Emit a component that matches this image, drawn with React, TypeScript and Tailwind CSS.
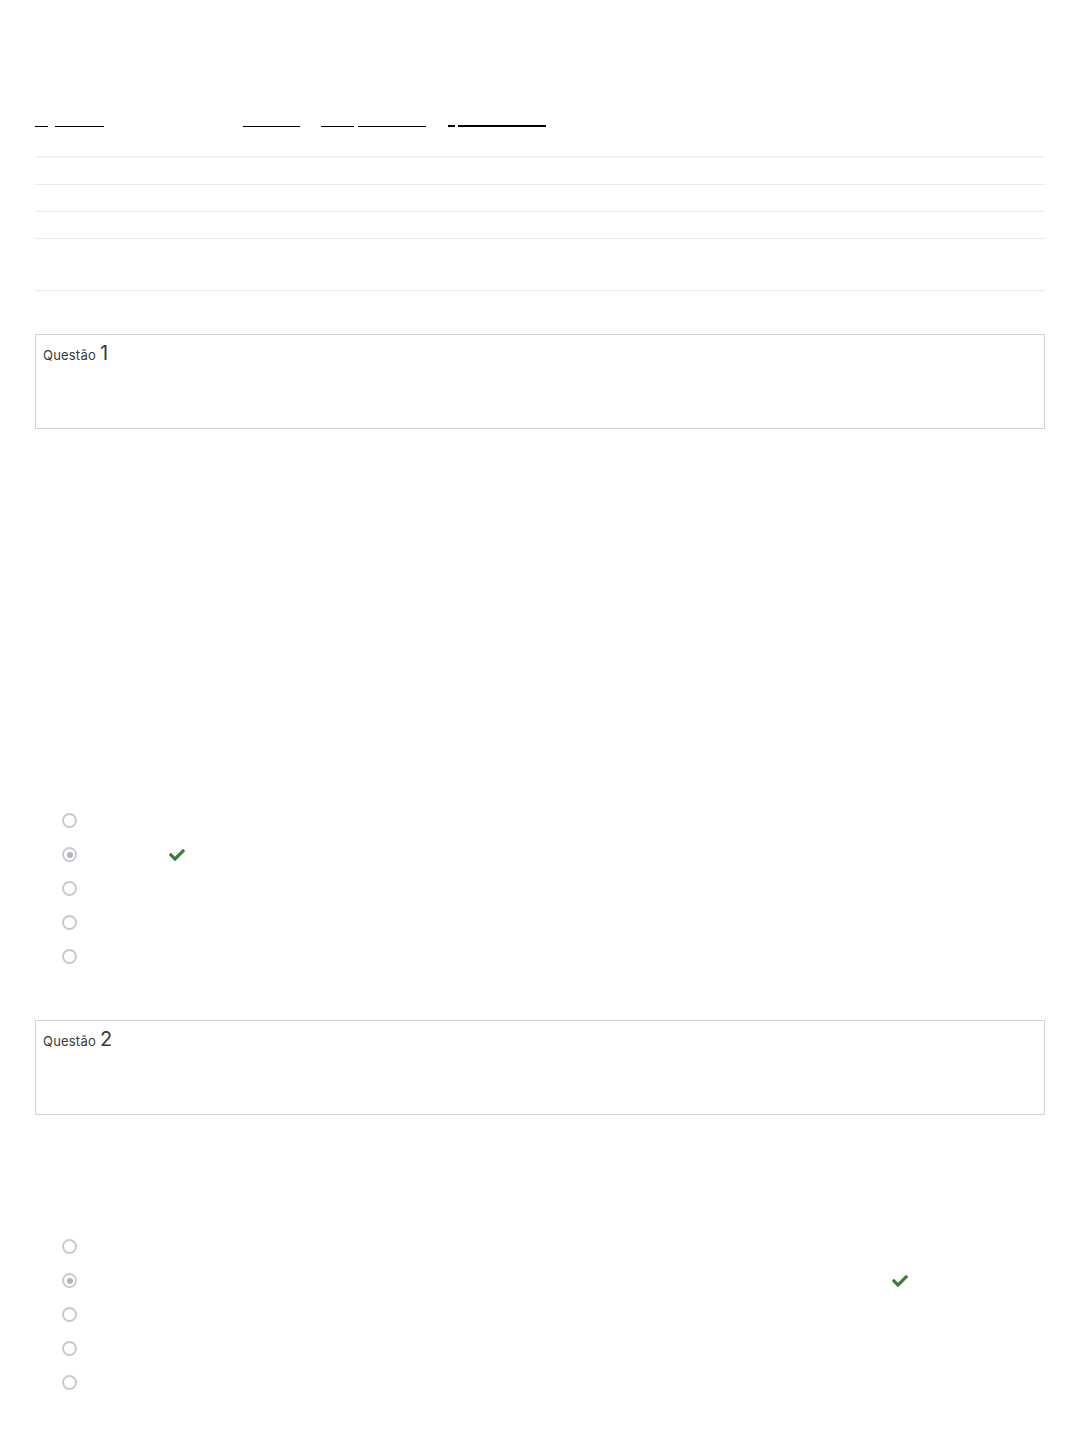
import React from "react";
import { FaCheck } from "react-icons/fa";

// Breadcrumb links: the text is not drawn, only the underline shows
const crumbs = [
  { label: "Iní", w: "w-[13px]", ml: "ml-0", bold: false },
  { label: "Meus cursos", w: "w-[49px]", ml: "ml-[7px]", bold: false },
  { label: "Disciplina", w: "w-[57px]", ml: "ml-[139px]", bold: false },
  { label: "Unidade", w: "w-[33px]", ml: "ml-[21px]", bold: false },
  { label: "Avaliação final", w: "w-[68px]", ml: "ml-[4px]", bold: false },
  { label: "Q", w: "w-[7px]", ml: "ml-[22px]", bold: true },
  { label: "Revisão da tentativa", w: "w-[88px]", ml: "ml-[3px]", bold: true },
];

const summaryRows = [
  { label: "Iniciado em", h: "h-[27px]" },
  { label: "Estado", h: "h-[27px]" },
  { label: "Concluída em", h: "h-[27px]" },
  { label: "Tempo empregado", h: "h-[52px]" },
];

type Option = { text: string; labelW: string; correct?: boolean };

const q1Options: Option[] = [
  { text: "a.", labelW: "w-[80px]" },
  { text: "b.", labelW: "w-[92px]", correct: true },
  { text: "c.", labelW: "w-[80px]" },
  { text: "d.", labelW: "w-[80px]" },
  { text: "e.", labelW: "w-[80px]" },
];

const q2Options: Option[] = [
  { text: "a.", labelW: "w-[300px]" },
  { text: "b.", labelW: "w-[815px]", correct: true },
  { text: "c.", labelW: "w-[300px]" },
  { text: "d.", labelW: "w-[300px]" },
  { text: "e.", labelW: "w-[300px]" },
];

const Radio = ({ checked }: { checked?: boolean }) => (
  <span className="flex h-[15px] w-[15px] shrink-0 items-center justify-center rounded-full border-2 border-[#c9c9ce] bg-white">
    {checked && <span className="h-[6px] w-[6px] rounded-full bg-[#b3b3bb]" />}
  </span>
);

const Answers = ({ options }: { options: Option[] }) => (
  <div className="flex flex-col pl-[27px]">
    {options.map((o, i) => (
      <div key={i} className="flex h-[34px] items-center">
        <Radio checked={o.correct} />
        <span
          className={`${o.labelW} whitespace-nowrap pl-2 text-sm text-transparent`}
        >
          {o.text}
        </span>
        {o.correct && <FaCheck className="h-[16px] w-[16px] text-[#3a7d3a]" />}
      </div>
    ))}
  </div>
);

const QuestionInfo = ({ n }: { n: number }) => (
  <div className="h-[95px] border border-[#cdd3d9] px-[7px] pt-[8px]">
    <h3 className="flex items-baseline gap-[4px] font-['Inter',sans-serif] text-[#343a40]">
      <span className="text-[13px] tracking-[0.2px]">Questão</span>
      <span className="text-[20px] leading-none">{n}</span>
    </h3>
  </div>
);

export default function App() {
  return (
    <div className="min-h-[1440px] w-full bg-white px-[35px] font-['Lato',sans-serif]">
      {/* Breadcrumb */}
      <nav className="flex items-end pt-[111px]">
        {crumbs.map((c, i) => (
          <a
            key={i}
            className={`${c.w} ${c.ml} h-[16px] whitespace-nowrap text-[5px] leading-none text-transparent ${
              c.bold ? "border-b-2" : "border-b"
            } border-black`}
          >
            {c.label}
          </a>
        ))}
      </nav>

      {/* Attempt summary */}
      <table className="mt-[29px] w-full border-t-2 border-[#f2f2f2]">
        <tbody>
          {summaryRows.map((r, i) => (
            <tr key={i} className={`${r.h} border-b border-[#e6e8eb]`}>
              <th className="w-[200px] text-left text-sm font-normal text-transparent">
                {r.label}
              </th>
              <td />
            </tr>
          ))}
        </tbody>
      </table>

      {/* Question 1 */}
      <div className="mt-[43px]">
        <QuestionInfo n={1} />
        <div className="h-[375px]" />
        <Answers options={q1Options} />
      </div>

      {/* Question 2 */}
      <div className="mt-[46px]">
        <QuestionInfo n={2} />
        <div className="h-[115px]" />
        <Answers options={q2Options} />
      </div>
    </div>
  );
}
